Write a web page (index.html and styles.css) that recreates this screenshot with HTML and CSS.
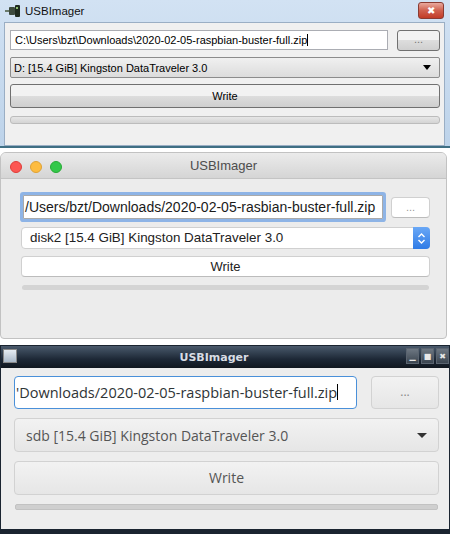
FILE: index.html
```html
<!DOCTYPE html>
<html>
<head>
    <title>USBImager</title>
    <link rel="stylesheet" href="styles.css">
</head>
<body>
    <div class="win7">
        <div class="win7-title">
            <svg class="win7-icon" width="16" height="14" viewBox="0 0 16 14">
                <rect x="0" y="6" width="4" height="2" fill="#6a7a6a"/>
                <rect x="4" y="3" width="6" height="8" rx="1" fill="#3d4a3d"/>
                <rect x="10" y="1" width="5" height="12" rx="1" fill="#1f2a1f"/>
                <rect x="11" y="3" width="2" height="2" fill="#8fbf6f"/>
            </svg>
            <span class="win7-name">USBImager</span>
            <div class="win7-close">&#x2716;</div>
        </div>
        <div class="win7-body">
            <div class="win7-row">
                <div class="win7-input">C:\Users\bzt\Downloads\2020-02-05-raspbian-buster-full.zip<span class="caret"></span></div>
                <div class="win7-btn win7-dots">...</div>
            </div>
            <div class="win7-select">
                <span>D: [15.4 GiB] Kingston DataTraveler 3.0</span>
                <span class="win7-arrow"></span>
            </div>
            <div class="win7-btn win7-write">Write</div>
            <div class="win7-progress"></div>
        </div>
    </div>

    <div class="mac">
        <div class="mac-title">
            <div class="lights">
                <span class="light red"></span>
                <span class="light yellow"></span>
                <span class="light green"></span>
            </div>
            <span class="mac-name">USBImager</span>
        </div>
        <div class="mac-body">
            <div class="mac-row">
                <div class="mac-input">/Users/bzt/Downloads/2020-02-05-rasbian-buster-full.zip</div>
                <div class="mac-btn mac-dots">...</div>
            </div>
            <div class="mac-select">
                <span>disk2 [15.4 GiB] Kingston DataTraveler 3.0</span>
                <span class="mac-stepper">
                    <svg width="9" height="13" viewBox="0 0 9 13">
                        <path d="M1.5 5 L4.5 2 L7.5 5 M1.5 8 L4.5 11 L7.5 8" fill="none" stroke="#fff" stroke-width="1.4"/>
                    </svg>
                </span>
            </div>
            <div class="mac-btn mac-write">Write</div>
            <div class="mac-progress"></div>
        </div>
    </div>

    <div class="x11">
        <div class="x11-title">
            <span class="x11-icon"></span>
            <span class="x11-name">USBImager</span>
            <div class="x11-buttons">
                <span class="x11-b">&#x2581;</span>
                <span class="x11-b">&#x25A0;</span>
                <span class="x11-b">&#x2716;</span>
            </div>
        </div>
        <div class="x11-body">
            <div class="x11-row">
                <div class="x11-input">'Downloads/2020-02-05-raspbian-buster-full.zip<span class="caret"></span></div>
                <div class="x11-btn x11-dots">...</div>
            </div>
            <div class="x11-btn x11-select">
                <span>sdb [15.4 GiB] Kingston DataTraveler 3.0</span>
                <span class="x11-arrow"></span>
            </div>
            <div class="x11-btn x11-write">Write</div>
            <div class="x11-progress"></div>
        </div>
    </div>
</body>
</html>
```

FILE: styles.css
```css
body { margin: 0; background: #fff; width: 450px; height: 534px; overflow: hidden; }
.caret { display: inline-block; width: 1px; height: 1.1em; background: #000; vertical-align: -2px; }

/* windows 7 */
.win7 { height: 148px; box-sizing: border-box; background: linear-gradient(#d2e2f3, #bdd3ea); border-bottom: 2px solid #3f6f84; padding: 0 5px 0 4px; font-family: "Liberation Sans", Arial, sans-serif; }
.win7-title { height: 22px; display: flex; align-items: center; position: relative; }
.win7-icon { margin: 0 4px 0 1px; }
.win7-name { font-size: 11.5px; color: #111; }
.win7-close { position: absolute; right: 1px; top: 2px; width: 26px; height: 17px; border-radius: 3px; border: 1px solid #8a3b32; box-sizing: border-box; background: linear-gradient(#e9a99d, #d0614f 50%, #c23b26); color: #fff; font-size: 10px; text-align: center; line-height: 15px; }
.win7-body { height: 124px; background: #f0f0f0; border: 1px solid #9aaec4; box-sizing: border-box; padding: 7px 4px 0 5px; display: flex; flex-direction: column; gap: 6px; }
.win7-row { display: flex; gap: 9px; }
.win7-input { flex: 1; height: 20px; box-sizing: border-box; background: #fff; border: 1px solid #abadb3; font-size: 11px; line-height: 18px; padding-left: 4px; color: #000; white-space: nowrap; overflow: hidden; }
.win7-btn { box-sizing: border-box; border: 1px solid #707070; border-radius: 3px; background: linear-gradient(#f2f2f2 50%, #dddddd 50%, #cfcfcf); font-size: 11px; color: #000; text-align: center; }
.win7-dots { width: 43px; height: 21px; line-height: 17px; color: #777; }
.win7-select { height: 21px; box-sizing: border-box; border: 1px solid #8c8c8c; border-radius: 2px; background: linear-gradient(#f0f0f0, #dcdcdc); font-size: 11px; padding: 0 8px 0 3px; display: flex; align-items: center; justify-content: space-between; }
.win7-arrow { width: 0; height: 0; border-left: 4px solid transparent; border-right: 4px solid transparent; border-top: 5px solid #000; }
.win7-write { height: 24px; line-height: 22px; }
.win7-progress { height: 6px; margin-top: 2px; border: 1px solid #bcbcbc; border-radius: 3px; background: linear-gradient(#e6e6e6, #d4d4d4); }

/* macos */
.mac { height: 187px; margin-top: 4px; width: 447px; box-sizing: border-box; border: 1px solid #c2c2c2; border-radius: 6px 6px 4px 4px; overflow: hidden; background: #ececec; font-family: "Liberation Sans", Arial, sans-serif; }
.mac-title { height: 26px; box-sizing: border-box; border-bottom: 1px solid #c4c4c4; background: linear-gradient(#ebebeb, #d5d5d5); position: relative; display: flex; align-items: center; justify-content: center; }
.lights { position: absolute; left: 9px; top: 8px; display: flex; gap: 8px; }
.light { width: 12px; height: 12px; border-radius: 50%; }
.red { background: #fc5753; border: 1px solid #df3d38; box-sizing: border-box; }
.yellow { background: #fdbc40; border: 1px solid #dea236; box-sizing: border-box; }
.green { background: #34c84a; border: 1px solid #27aa35; box-sizing: border-box; }
.mac-name { font-size: 13px; color: #4d4d4d; }
.mac-body { padding: 16px 16px 0 20px; display: flex; flex-direction: column; gap: 7px; }
.mac-row { display: flex; gap: 8px; align-items: center; }
.mac-input { flex: 1; height: 24px; box-sizing: border-box; background: #fff; border: 1px solid #aaa; box-shadow: 0 0 0 3px #8eb4e6; border-radius: 1px; font-size: 14px; line-height: 22px; padding-left: 1px; color: #1a1a1a; white-space: nowrap; overflow: hidden; margin-left: 2px; }
.mac-btn { box-sizing: border-box; background: #fff; border: 1px solid #d0d0d0; border-bottom-color: #bcbcbc; border-radius: 4px; font-size: 13px; color: #222; text-align: center; }
.mac-dots { width: 39px; height: 21px; line-height: 18px; color: #999; font-size: 11px; }
.mac-select { height: 22px; margin-top: 1px; box-sizing: border-box; background: #fff; border: 1px solid #d0d0d0; border-radius: 4px; display: flex; justify-content: space-between; align-items: stretch; padding-left: 8px; font-size: 13.4px; color: #222; line-height: 20px; }
.mac-stepper { width: 17px; margin: -1px -1px -1px 0; border-radius: 0 4px 4px 0; background: linear-gradient(#6aa8f6, #2f7be6); display: flex; align-items: center; justify-content: center; }
.mac-write { height: 21px; line-height: 19px; }
.mac-progress { height: 5px; margin: 1px 1px 0; border-radius: 3px; background: #d4d4d4; }

/* x11 */
.x11 { height: 189px; margin-top: 6px; box-sizing: border-box; background: #ededed; border: 1px solid #1a2430; border-bottom-width: 5px; font-family: "Open Sans", "DejaVu Sans", sans-serif; }
.x11-title { height: 22px; background: linear-gradient(#4a5a6c, #1d2836 60%, #10171f); display: flex; align-items: center; justify-content: center; position: relative; padding-right: 22px; }
.x11-icon { position: absolute; left: 2px; top: 3px; width: 14px; height: 14px; border: 1px solid #888; background: linear-gradient(#e6ecf2, #a9b8c8); box-sizing: border-box; }
.x11-name { color: #d8dde4; font-weight: bold; font-size: 11px; font-family: "DejaVu Sans", sans-serif; }
.x11-buttons { position: absolute; right: 0; top: 2px; display: flex; gap: 2px; }
.x11-b { width: 13px; height: 16px; box-sizing: border-box; border: 1px solid #5a6470; background: linear-gradient(#6d7782, #3b4550); color: #e8e8e8; font-size: 8px; text-align: center; line-height: 14px; }
.x11-body { padding: 8px 10px 0 13px; display: flex; flex-direction: column; gap: 9px; }
.x11-row { display: flex; gap: 14px; }
.x11-input { flex: 1; height: 33px; box-sizing: border-box; background: #fff; border: 1px solid #4a90d9; border-radius: 4px; font-size: 14.5px; line-height: 31px; padding-left: 1px; color: #2e3436; white-space: nowrap; overflow: hidden; }
.x11-btn { box-sizing: border-box; border: 1px solid #d2d2d2; border-radius: 4px; background: linear-gradient(#f2f2f2, #e6e6e6); font-size: 14px; color: #555; text-align: center; }
.x11-dots { width: 68px; height: 33px; line-height: 29px; color: #888; font-size: 12px; }
.x11-select { height: 34px; display: flex; align-items: center; justify-content: space-between; padding: 0 11px 0 11px; }
.x11-arrow { width: 0; height: 0; border-left: 5px solid transparent; border-right: 5px solid transparent; border-top: 5px solid #333; }
.x11-write { height: 34px; line-height: 32px; }
.x11-progress { height: 4px; margin: 0 1px; border-radius: 2px; background: #cfcfcf; border: 1px solid #c2c2c2; }
```
